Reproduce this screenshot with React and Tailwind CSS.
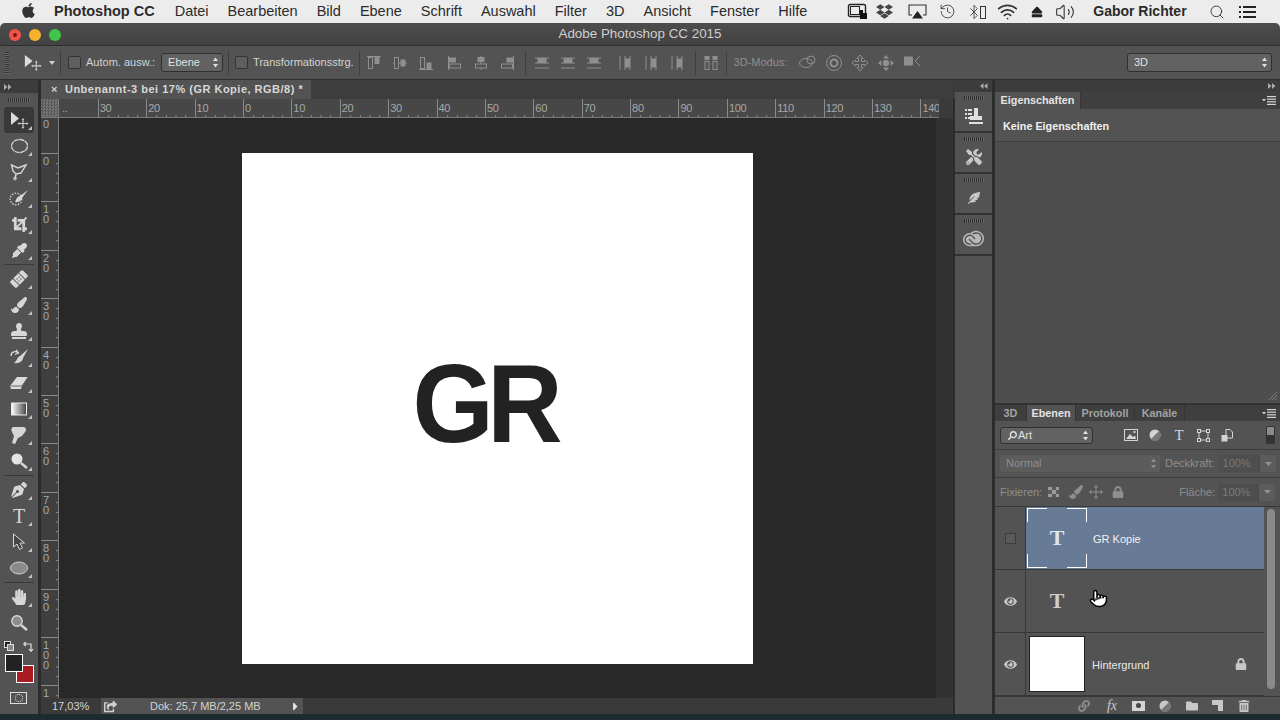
import React from 'react';
import { FaApple, FaDropbox, FaStamp, FaTools, FaFeatherAlt, FaEyeDropper, FaBandAid, FaPaintBrush, FaCrop, FaPenNib, FaHandPaper, FaSearch, FaEye, FaLock, FaLink, FaTrashAlt, FaFolder, FaShareSquare, FaCaretRight, FaEject } from 'react-icons/fa';
import { SiAdobecreativecloud } from 'react-icons/si';
import { Bluetooth, Wifi, Volume2, History, Search, Pointer } from 'lucide-react';

const Chevrons = () => (
  <svg width="7" height="11" viewBox="0 0 7 11" className="shrink-0">
    <path d="M3.5 0.5 L6 4 H1Z M3.5 10.5 L6 7 H1Z" fill="currentColor" />
  </svg>
);

const MoveIcon = ({ size = 20 }) => (
  <svg width={size} height={size} viewBox="0 0 20 20">
    <path d="M2 2 V15 L10 8.5Z" fill="#dcdcdc" />
    <path d="M14 9 V18 M9.5 13.5 H18.5" stroke="#c8c8c8" strokeWidth="1.2" />
    <path d="M14 8 L12.5 10 H15.5Z M14 19 L12.5 17 H15.5Z M8.5 13.5 L10.5 12 V15Z M19.5 13.5 L17.5 12 V15Z" fill="#c8c8c8" />
  </svg>
);

const Grip = ({ w = 'w-[22px]' }) => (
  <div className={`h-[4px] ${w} bg-[repeating-linear-gradient(90deg,#2c2c2c_0,#2c2c2c_1px,#6a6a6a_1px,#6a6a6a_2px)]`} />
);

const AlignIcon = ({ v = 0 }) => (
  <svg width="16" height="16" viewBox="0 0 16 16" fill="none" stroke="#8f8f8f">
    {v === 0 && <><path d="M1 1.5 H15" /><rect x="2.5" y="2.5" width="4" height="11" /><rect x="9" y="2.5" width="4" height="6" fill="#8f8f8f" /></>}
    {v === 1 && <><path d="M1 8 H15" /><rect x="2.5" y="2.5" width="4" height="11" fill="#535353" /><rect x="9" y="5" width="4" height="6" fill="#8f8f8f" /></>}
    {v === 2 && <><path d="M1 14.5 H15" /><rect x="2.5" y="2.5" width="4" height="11" /><rect x="9" y="8" width="4" height="6" fill="#8f8f8f" /></>}
    {v === 3 && <><path d="M1.5 1 V15" /><rect x="2.5" y="3" width="6" height="4" fill="#8f8f8f" /><rect x="2.5" y="9" width="11" height="4" /></>}
    {v === 4 && <><path d="M8 1 V15" /><rect x="5" y="2.5" width="6" height="4" fill="#8f8f8f" /><rect x="2.5" y="9" width="11" height="4" fill="#535353" /></>}
    {v === 5 && <><path d="M14.5 1 V15" /><rect x="8" y="3" width="6" height="4" fill="#8f8f8f" /><rect x="2.5" y="9" width="11" height="4" /></>}
    {v === 6 && <><path d="M1 3 H15 M1 8 H15 M1 13 H15" /><rect x="4" y="3.5" width="8" height="4" fill="#8f8f8f" /></>}
    {v === 7 && <><path d="M3 1 V15 M8 1 V15 M13 1 V15" /><rect x="8.5" y="4" width="4" height="8" fill="#8f8f8f" /></>}
    {v === 8 && <><rect x="2" y="1.5" width="4" height="3" fill="#8f8f8f" /><rect x="2" y="6.5" width="4" height="8" /><rect x="10" y="1.5" width="4" height="3" fill="#8f8f8f" /><rect x="10" y="6.5" width="4" height="8" /></>}
  </svg>
);

const Sep = () => <div className="mx-[5px] h-[24px] w-px bg-[#3f3f3f]" />;

const Check = ({ cls = 'bg-[#5f5f5f]' }) => (
  <div className={`h-[13px] w-[13px] rounded-[2px] border border-[#333] ${cls}`} />
);

const menus = ['Datei', 'Bearbeiten', 'Bild', 'Ebene', 'Schrift', 'Auswahl', 'Filter', '3D', 'Ansicht', 'Fenster', 'Hilfe'];

const MenuBar = () => (
  <div className="flex h-[23px] shrink-0 items-center whitespace-nowrap bg-[#ececec] pl-[20px] text-[14.5px] text-[#2b2b2b]">
    <FaApple size={17} className="mb-[2px] text-[#333]" />
    <span className="ml-[17px] font-bold">Photoshop CC</span>
    <div className="ml-[20px] flex gap-[19px]">
      {menus.map((m) => <span key={m}>{m}</span>)}
    </div>
    <div className="ml-[40px] flex items-center text-[#2a2a2a]">
      <svg width="24" height="18" viewBox="0 0 24 18" className="mr-[5px]">
        <rect x="1.5" y="1.5" width="17" height="12" rx="1.5" fill="none" stroke="#222" strokeWidth="1.4" />
        <rect x="3.5" y="3.5" width="9" height="8" fill="none" stroke="#222" />
        <path d="M13 7 h3 v3 h4 v6 h-7z" fill="#111" />
      </svg>
      <FaDropbox size={17} className="mr-[15px] text-[#444]" />
      <svg width="19" height="16" viewBox="0 0 19 16" className="mr-[12px]" fill="none">
        <path d="M4 11 H1 V1 H18 V11 H15" stroke="#333" strokeWidth="1.1" />
        <path d="M9.5 7 L15 14.5 H4Z" fill="#222" />
      </svg>
      <History size={17} strokeWidth={1.2} className="mr-[10px] text-[#333]" />
      <Bluetooth size={16} strokeWidth={1.2} className="mr-[-2px] text-[#333]" />
      <div className="mr-[11px] mt-[1px] h-[13px] w-[6px] border border-[#333]" />
      <Wifi size={21} strokeWidth={2} className="mr-[13px] text-[#333]" />
      <FaEject size={12} className="mr-[12px] text-[#222]" />
      <Volume2 size={20} strokeWidth={1.3} className="mr-[18px] text-[#333]" />
      <span className="text-[14px] font-bold">Gabor Richter</span>
      <Search size={16} strokeWidth={1.4} className="ml-[22px] text-[#333]" />
      <svg width="18" height="12" viewBox="0 0 18 12" className="ml-[14px]" fill="#222">
        <rect x="0" y="0" width="2" height="2" /><rect x="0" y="5" width="2" height="2" /><rect x="0" y="10" width="2" height="2" />
        <rect x="4" y="0" width="13" height="2" /><rect x="4" y="5" width="13" height="2" /><rect x="4" y="10" width="13" height="2" />
      </svg>
    </div>
  </div>
);

const TitleBar = () => (
  <div className="flex h-[23px] shrink-0 items-center justify-center bg-[#ececec]">
    <div className="relative flex h-full w-full items-center justify-center rounded-t-[5px] border-b border-[#2f2f2f] bg-[linear-gradient(#4d4d4d,#424242)] text-[13.4px] text-[#cfcfcf]">
      <div className="absolute left-[9px] top-[6px] flex gap-[8px]">
        <div className="flex h-[12px] w-[12px] items-center justify-center rounded-full bg-[#f2524a]"><div className="h-[4px] w-[4px] rounded-full bg-[#7a1712]" /></div>
        <div className="h-[12px] w-[12px] rounded-full bg-[#f6b22f]" />
        <div className="h-[12px] w-[12px] rounded-full bg-[#3fc64a]" />
      </div>
      Adobe Photoshop CC 2015
    </div>
  </div>
);

const OptionsBar = () => (
  <div className="flex h-[34px] shrink-0 items-center border-b border-[#2f2f2f] bg-[#535353] pl-[5px] text-[11px] text-[#d4d4d4]">
    <div className="h-[22px] w-[4px] bg-[repeating-linear-gradient(#2f2f2f_0,#2f2f2f_1px,#6b6b6b_1px,#6b6b6b_2px)]" />
    <div className="ml-[14px]"><MoveIcon size={19} /></div>
    <svg width="6" height="4" className="ml-[7px]"><path d="M0 0 H6 L3 4Z" fill="#cfcfcf" /></svg>
    <Sep />
    <div className="ml-[2px]"><Check /></div>
    <span className="ml-[5px] whitespace-nowrap">Autom. ausw.:</span>
    <div className="ml-[6px] flex h-[19px] w-[62px] items-center justify-between rounded-[3px] border border-[#303030] bg-[#626262] pl-[6px] pr-[3px] font-medium text-[#e0e0e0]">
      Ebene <Chevrons />
    </div>
    <Sep />
    <div className="ml-[1px]"><Check /></div>
    <span className="ml-[5px] whitespace-nowrap">Transformationsstrg.</span>
    <Sep />
    <div className="ml-[-4px] flex">
      {[0, 1, 2].map((v) => <div key={v} className="flex w-[26px] justify-center"><AlignIcon v={v} /></div>)}
    </div>
    <div className="ml-[3px] flex">
      {[3, 4, 5].map((v) => <div key={v} className="flex w-[26px] justify-center"><AlignIcon v={v} /></div>)}
    </div>
    <Sep />
    <div className="ml-[-2px] flex">
      {[6, 6, 6].map((v, i) => <div key={i} className="flex w-[26px] justify-center"><AlignIcon v={v} /></div>)}
    </div>
    <div className="ml-[5px] flex">
      {[7, 7, 7].map((v, i) => <div key={i} className="flex w-[26px] justify-center"><AlignIcon v={v} /></div>)}
    </div>
    <Sep />
    <div className="flex w-[20px] justify-center"><AlignIcon v={8} /></div>
    <Sep />
    <span className="ml-[2px] whitespace-nowrap text-[#8f8f8f]">3D-Modus:</span>
    <div className="ml-[8px] flex text-[#8f8f8f]">
      <div className="flex w-[26px] justify-center">
        <svg width="20" height="16" viewBox="0 0 20 16" fill="none" stroke="currentColor"><ellipse cx="8" cy="9" rx="6.5" ry="4.5" /><circle cx="13" cy="6" r="4" /></svg>
      </div>
      <div className="flex w-[26px] justify-center">
        <svg width="18" height="18" viewBox="0 0 18 18" fill="none" stroke="currentColor"><circle cx="9" cy="9" r="7.5" /><circle cx="9" cy="9" r="3.5" strokeWidth="2" /></svg>
      </div>
      <div className="flex w-[26px] justify-center">
        <svg width="18" height="18" viewBox="0 0 18 18" fill="none" stroke="currentColor"><path d="M9 1 L12 4.5 H10.5 V7.5 H13.5 V6 L17 9 L13.5 12 V10.5 H10.5 V13.5 H12 L9 17 L6 13.5 H7.5 V10.5 H4.5 V12 L1 9 L4.5 6 V7.5 H7.5 V4.5 H6Z" /></svg>
      </div>
      <div className="flex w-[26px] justify-center">
        <svg width="18" height="18" viewBox="0 0 18 18" fill="currentColor"><path d="M9 1 L12 4.5 H6Z M9 17 L6 13.5 H12Z M1 9 L4.5 6 V12Z M17 9 L13.5 6 V12Z" /><circle cx="9" cy="9" r="3.2" /></svg>
      </div>
      <div className="flex w-[26px] justify-center">
        <svg width="18" height="14" viewBox="0 0 18 14" fill="currentColor"><rect x="1" y="2.5" width="9" height="9" rx="1" /><path d="M17 2 L12 7 L17 12" fill="none" stroke="currentColor" /></svg>
      </div>
    </div>
    <div className="ml-auto mr-[8px] flex h-[19px] w-[145px] items-center justify-between rounded-[3px] border border-[#303030] bg-[#626262] pl-[6px] pr-[3px] font-medium text-[#e0e0e0]">
      3D <Chevrons />
    </div>
  </div>
);

const Arrows = ({ dir = 'right' }) => (
  <svg width="8" height="6" viewBox="0 0 8 6" fill="#aaa">
    {dir === 'right' ? <path d="M0 0 L3.5 3 L0 6Z M4 0 L7.5 3 L4 6Z" /> : <path d="M3.5 0 L0 3 L3.5 6Z M7.5 0 L4 3 L7.5 6Z" />}
  </svg>
);

const ic = 'text-[#d6d6d6]';
const tools = [
  { icon: <MoveIcon />, active: true },
  { icon: <svg width="19" height="16" viewBox="0 0 19 16"><ellipse cx="9.5" cy="8" rx="8" ry="6.5" fill="none" stroke="#d6d6d6" strokeWidth="1.3" strokeDasharray="5 0.6" /></svg> },
  { icon: <svg width="19" height="18" viewBox="0 0 19 18"><path d="M1.5 2 L8 5 L16 2 L11 10 L6 11 L3 8Z M6 11 L5 16" fill="none" stroke="#d6d6d6" strokeWidth="1.4" /><circle cx="5" cy="15.5" r="1.4" fill="none" stroke="#d6d6d6" /></svg> },
  { icon: <svg width="20" height="18" viewBox="0 0 20 18"><circle cx="7" cy="10" r="5.8" fill="none" stroke="#d6d6d6" strokeDasharray="1.4 1.4" strokeWidth="1.3" /><path d="M19 1 L11 7 C7 8 7 12 6 13 C10 14 13 11 13 9Z" fill="#d6d6d6" /></svg> },
  { icon: <FaCrop size={15} className={ic} /> },
  { icon: <FaEyeDropper size={15} className={ic} />, sep: true },
  { icon: <FaBandAid size={18} className={`${ic} -rotate-45`} /> },
  { icon: <FaPaintBrush size={16} className={ic} /> },
  { icon: <FaStamp size={16} className={ic} /> },
  { icon: <svg width="20" height="18" viewBox="0 0 20 18"><path d="M19 1 L11 8 C8 9 8 13 5 15 C10 16 14 13 14 10Z" fill="#d6d6d6" /><path d="M2 8 C2 3 7 3 9 5 M7 2 L9.5 5 L6 6.5" fill="none" stroke="#d6d6d6" strokeWidth="1.3" /></svg> },
  { icon: <svg width="20" height="14" viewBox="0 0 20 14"><path d="M8 1 H19 L13 10 L12 13 H2 L1 10Z" fill="#dcdcdc" /><path d="M1.5 10 H13 L19 1" fill="none" stroke="#666" /></svg> },
  { icon: <svg width="16" height="16" viewBox="0 0 16 16"><defs><linearGradient id="gr" x1="0" x2="1"><stop offset="0" stopColor="#fff" /><stop offset="1" stopColor="#444" /></linearGradient></defs><rect x="0.5" y="2" width="15" height="12" fill="url(#gr)" stroke="#eee" /></svg> },
  { icon: <svg width="18" height="19" viewBox="0 0 18 19"><path d="M3 1 H13 C16 1 17 4 15 6 L12 10 L8 12 L5 18 L2 17 L4 10 L2 6 C1 4 1 2 3 1Z" fill="#d6d6d6" /></svg> },
  { icon: <svg width="18" height="18" viewBox="0 0 18 18"><circle cx="7" cy="7" r="5.5" fill="#e4e4e4" /><path d="M11 11 L17 16" stroke="#d6d6d6" strokeWidth="2.4" /></svg>, sep: true },
  { icon: <FaPenNib size={16} className={ic} /> },
  { icon: <span className="font-['Liberation_Serif',serif] text-[20px] leading-none text-[#d6d6d6]">T</span> },
  { icon: <svg width="14" height="18" viewBox="0 0 14 18"><path d="M1.5 1 V14 L5 11 L7.5 16.5 L10.5 15 L8 10 L12.5 10Z" fill="#444" stroke="#d6d6d6" /></svg> },
  { icon: <svg width="20" height="14" viewBox="0 0 20 14"><ellipse cx="10" cy="7" rx="8.5" ry="6" fill="#8a8a8a" stroke="#cfcfcf" /></svg>, sep: true },
  { icon: <FaHandPaper size={16} className={ic} /> },
  { icon: <svg width="18" height="18" viewBox="0 0 18 18"><circle cx="7" cy="7" r="5.2" fill="#8d8d8d" stroke="#d6d6d6" strokeWidth="1.4" /><path d="M11 11 L17 16" stroke="#d6d6d6" strokeWidth="2.4" /></svg>, bare: true },
];

const ToolBox = () => (
  <div className="flex w-[38px] shrink-0 flex-col bg-[#535353]">
    <div className="flex h-[13px] items-center bg-[#3c3c3c] pl-[4px]"><Arrows /></div>
    <div className="flex h-[14px] items-center justify-center"><Grip /></div>
    <div className="flex flex-col items-center">
      {tools.map((t, i) => (
        <React.Fragment key={i}>
          <div className={`relative flex h-[26px] w-[30px] items-center justify-center rounded-[3px] ${t.active ? 'bg-[#383838]' : ''}`}>
            {t.icon}
            {!t.bare && <div className="absolute bottom-[3px] right-[2px] h-0 w-0 border-b-[4px] border-l-[4px] border-b-[#c4c4c4] border-l-transparent" />}
          </div>
          {t.sep && <div className="my-[1px] h-px w-[30px] bg-[#3a3a3a]" />}
        </React.Fragment>
      ))}
    </div>
    <div className="mt-[4px] flex h-[12px] items-center justify-between px-[4px]">
      <svg width="10" height="10" viewBox="0 0 10 10"><rect x="0.5" y="0.5" width="6" height="6" fill="#222" stroke="#ddd" /><rect x="3.5" y="3.5" width="6" height="6" fill="#888" stroke="#ddd" /></svg>
      <svg width="11" height="11" viewBox="0 0 11 11" fill="none" stroke="#ddd" strokeWidth="1.2"><path d="M1 3 H8 V10 M0.5 3 L3 1 M0.5 3 L3 5 M8 10.5 L6 8 M8 10.5 L10 8" /></svg>
    </div>
    <div className="relative ml-[5px] mt-[2px] h-[29px] w-[29px]">
      <div className="absolute bottom-0 right-0 h-[18px] w-[18px] border border-white bg-[#a81c22]" />
      <div className="absolute left-0 top-0 h-[18px] w-[18px] border border-white bg-[#222]" />
    </div>
    <div className="ml-[10px] mt-[9px] flex h-[12px] w-[17px] items-center justify-center border border-[#ddd]">
      <div className="h-[8px] w-[8px] rounded-full border border-dotted border-[#eee]" />
    </div>
  </div>
);

const topLabels = ['30', '20', '10', '0', '10', '20', '30', '40', '50', '60', '70', '80', '90', '100', '110', '120', '130', '140'];
const leftLabels = ['0', '10', '20', '30', '40', '50', '60', '70', '80', '90', '100', '1'];

const HTicks = () => (
  <svg className="absolute bottom-0 left-0" width="49" height="5">
    <path d="M9.7 5 V3 M19.4 5 V3 M29 5 V3 M38.7 5 V3" stroke="#8a8a8a" />
  </svg>
);
const VTicks = () => (
  <svg className="absolute right-0 top-0" width="5" height="49">
    <path d="M5 9.7 H3 M5 19.4 H3 M5 29 H3 M5 38.7 H3" stroke="#8a8a8a" />
  </svg>
);

const TopRuler = () => (
  <div className="flex h-[19px] flex-1 overflow-hidden border-b border-[#7b7b7b] bg-[#474747] text-[11px] leading-[18px] tracking-[-0.3px] text-[#a8a8a8]">
    <div className="relative w-[38.8px] shrink-0 pl-[3px]">..</div>
    {topLabels.map((l, i) => (
      <div key={i} className="relative w-[48.4px] shrink-0 overflow-hidden border-l border-[#8a8a8a] pl-[1px] last:w-[19.4px]">
        {l}
        <HTicks />
      </div>
    ))}
  </div>
);

const LeftRuler = () => (
  <div className="flex w-[18px] shrink-0 flex-col overflow-hidden border-r border-[#7b7b7b] bg-[#3f3f3f] text-[11px] leading-[10px] text-[#a8a8a8]">
    <div className="h-[35px] shrink-0 pl-[2px] pt-[1px]">0</div>
    {leftLabels.map((l, i) => (
      <div key={i} className="relative h-[48.4px] shrink-0 border-t border-[#8a8a8a] pl-[2px] pt-[2px]">
        {l.split('').map((d, j) => <div key={j}>{d}</div>)}
        <VTicks />
      </div>
    ))}
  </div>
);

const DocArea = () => (
  <div className="flex min-w-0 flex-1 flex-col">
    <div className="flex h-[19px] shrink-0 bg-[#3d3d3d]">
      <div className="flex w-[270px] items-center gap-[7px] bg-[#535353] pl-[10px] text-[11px] font-bold tracking-[0.5px] text-[#d8d8d8]">
        <span className="text-[#cfcfcf]">×</span>
        <span className="whitespace-nowrap">Unbenannt-3 bei 17% (GR Kopie, RGB/8) *</span>
      </div>
    </div>
    <div className="flex h-[19px] shrink-0">
      <div className="w-[18px] border-b border-r border-[#7b7b7b] bg-[repeating-conic-gradient(#5a5a5a_0_25%,#777_0_50%)] bg-[length:3px_3px]" />
      <div className="flex min-w-0 w-[880px] shrink-0"><TopRuler /></div>
      <div className="flex-1 border-r-2 border-[#2c2c2c] bg-[#3a3a3a]" />
    </div>
    <div className="flex min-h-0 flex-1">
      <LeftRuler />
      <div className="w-[877px] shrink-0 bg-[#282828] pl-[183px] pt-[35px]">
        <div className="flex h-[511px] w-[511px] items-center justify-center bg-white pb-[8px] pr-[26px]">
          <span className="scale-x-[0.94] text-[111px] font-bold leading-none tracking-[-7px] text-[#222]">GR</span>
        </div>
      </div>
      <div className="flex-1 border-r-2 border-[#2c2c2c] bg-[#323232]" />
    </div>
    <div className="flex h-[16px] shrink-0 items-center border-r-2 border-[#2c2c2c] bg-[#3a3a3a] text-[11px] text-[#d2d2d2]">
      <div className="w-[60px] pl-[11px]">17,03%</div>
      <div className="flex h-full w-[202px] items-center bg-[#535353]">
        <FaShareSquare size={13} className="ml-[3px] text-[#d0d0d0]" />
        <span className="ml-[33px]">Dok: 25,7 MB/2,25 MB</span>
        <FaCaretRight size={13} className="ml-auto mr-[1px] text-[#e4e4e4]" />
      </div>
    </div>
  </div>
);

const DockCell = ({ children }) => (
  <div className="flex h-[41px] flex-col items-center border-b-2 border-[#323232] bg-[#535353] pt-[4px]">
    <Grip w="w-[20px]" />
    <div className="flex flex-1 items-center justify-center text-[#c8c8c8]">{children}</div>
  </div>
);

const Dock = () => (
  <div className="flex w-[40px] shrink-0 flex-col border-r-3 border-[#2c2c2c]">
    <div className="flex h-[12px] items-center justify-end bg-[#3c3c3c] pr-[4px]"><Arrows dir="left" /></div>
    <DockCell>
      <svg width="20" height="20" viewBox="0 0 20 20" fill="#e0e0e0">
        <rect x="1" y="3" width="2" height="2" /><rect x="4" y="3" width="4" height="2" />
        <rect x="1" y="7" width="2" height="2" /><rect x="4" y="7" width="4" height="2" />
        <rect x="1" y="11" width="2" height="2" /><rect x="4" y="11" width="4" height="2" />
        <path d="M10 2 h4 v8 h4 v4 H6 v-4 h4z M5 16 H19 V18 H5z" />
      </svg>
    </DockCell>
    <DockCell><FaTools size={16} /></DockCell>
    <DockCell><FaFeatherAlt size={12} /></DockCell>
    <DockCell><SiAdobecreativecloud size={21} className="text-[#b8b8b8]" /></DockCell>
    <div className="flex-1 bg-[#535353]" />
  </div>
);

const Tab = ({ label, active, w }) => (
  <div className={`flex h-full items-center justify-center border-r border-[#353535] text-[10.8px] font-bold ${w} ${active ? 'bg-[#535353] text-[#e4e4e4]' : 'text-[#a4a4a4]'}`}>
    {label}
  </div>
);

const PanelMenu = () => (
  <svg width="14" height="9" viewBox="0 0 14 9" fill="#d4d4d4" className="ml-auto mr-[4px]">
    <path d="M0 3 H4 L2 5.5Z" /><rect x="5" y="0" width="9" height="1.2" /><rect x="5" y="2.6" width="9" height="1.2" /><rect x="5" y="5.2" width="9" height="1.2" /><rect x="5" y="7.8" width="9" height="1.2" />
  </svg>
);

const LayerRow = ({ eye, children }) => (
  <div className="flex h-[63px] shrink-0 border-b border-[#383838]">
    <div className="flex w-[31px] shrink-0 items-center justify-center border-r border-[#383838]">
      {eye ? <FaEye size={13} className="text-[#c8c8c8]" /> : <div className="h-[11px] w-[11px] border border-[#3d3d3d] bg-[#5a5a5a]" />}
    </div>
    {children}
  </div>
);

const Panels = () => (
  <div className="flex min-w-0 flex-1 flex-col bg-[#535353]">
    <div className="flex h-[12px] shrink-0 items-center justify-end bg-[#3c3c3c] pr-[4px]"><Arrows /></div>
    {/* Eigenschaften */}
    <div className="flex h-[17px] shrink-0 items-center bg-[#3f3f3f]">
      <Tab label="Eigenschaften" active w="w-[86px]" />
      <PanelMenu />
    </div>
    <div className="flex h-[33px] shrink-0 items-center border-b border-[#3f3f3f] pl-[8px] pt-[2px] text-[10.8px] font-bold text-[#f0f0f0]">Keine Eigenschaften</div>
    <div className="flex h-[261px] shrink-0 items-end justify-end bg-[#4e4e4e] p-[2px]">
      <svg width="10" height="10" viewBox="0 0 10 10" stroke="#7a7a7a"><path d="M9 1 L1 9 M9 4 L4 9 M9 7 L7 9" /></svg>
    </div>
    {/* Ebenen */}
    <div className="flex h-[18px] shrink-0 items-center border-t-2 border-[#323232] bg-[#3f3f3f]">
      <Tab label="3D" w="w-[32px]" />
      <Tab label="Ebenen" active w="w-[49px]" />
      <Tab label="Protokoll" w="w-[59px]" />
      <Tab label="Kanäle" w="w-[50px]" />
      <PanelMenu />
    </div>
    <div className="flex h-[29px] shrink-0 items-center border-b border-[#3d3d3d] pl-[5px]">
      <div className="flex h-[17px] w-[93px] items-center justify-between rounded-[3px] border border-[#303030] bg-[#626262] pl-[7px] pr-[3px] text-[11px] font-medium text-[#e0e0e0]">
        <span className="flex items-center gap-[1px]"><FaSearch size={9} className="-scale-x-100" />Art</span><Chevrons />
      </div>
      <div className="ml-[26px] flex items-center text-[#d4d4d4]">
        <div className="flex w-[24px] justify-center">
          <svg width="14" height="12" viewBox="0 0 14 12"><rect x="0.5" y="0.5" width="13" height="11" fill="none" stroke="currentColor" /><path d="M2 10 L6 5 L9 8 L11 6.5 L12 10Z" fill="currentColor" /><rect x="9.5" y="2" width="2" height="2" fill="currentColor" /></svg>
        </div>
        <div className="flex w-[24px] justify-center">
          <svg width="12" height="12" viewBox="0 0 12 12"><circle cx="6" cy="6" r="5.5" fill="currentColor" /><path d="M10 2 A5.5 5.5 0 0 1 2 10Z" fill="#777" /></svg>
        </div>
        <div className="flex w-[24px] justify-center font-['Liberation_Serif',serif] text-[15px] leading-none">T</div>
        <div className="flex w-[24px] justify-center">
          <svg width="13" height="13" viewBox="0 0 13 13" fill="none" stroke="currentColor"><rect x="2" y="2" width="9" height="9" /><rect x="0.5" y="0.5" width="3" height="3" fill="#535353" /><rect x="9.5" y="0.5" width="3" height="3" fill="#535353" /><rect x="0.5" y="9.5" width="3" height="3" fill="#535353" /><rect x="9.5" y="9.5" width="3" height="3" fill="#535353" /></svg>
        </div>
        <div className="flex w-[24px] justify-center">
          <svg width="12" height="13" viewBox="0 0 12 13"><path d="M5 0.5 H9 L11.5 3 V9 H5Z" fill="none" stroke="currentColor" /><rect x="0.5" y="6" width="6" height="6.5" fill="currentColor" /></svg>
        </div>
      </div>
      <div className="ml-auto mr-[5px] flex h-[18px] w-[9px] flex-col rounded-[1px] border border-[#333]">
        <div className="h-1/2 bg-[#8a8a8a]" /><div className="h-1/2 bg-[#333]" />
      </div>
    </div>
    <div className="flex h-[28px] shrink-0 items-center border-b border-[#3d3d3d] pl-[5px] text-[11px] text-[#8e8e8e]">
      <div className="flex h-[17px] w-[160px] items-center justify-between rounded-[2px] bg-[#5c5c5c] pl-[6px] pr-[3px]">
        Normal <Chevrons />
      </div>
      <span className="ml-[5px] font-medium">Deckkraft:</span>
      <div className="ml-[4px] flex h-[17px] w-[57px] items-center rounded-[2px] bg-[#5c5c5c] text-[#7a7a7a]">
        <span className="w-[41px] border-r border-[#4a4a4a] bg-[#4e4e4e] pl-[4px] leading-[17px]">100%</span>
        <svg width="7" height="4" className="ml-[5px]"><path d="M0 0 H7 L3.5 4Z" fill="#8e8e8e" /></svg>
      </div>
    </div>
    <div className="flex h-[29px] shrink-0 items-center border-b border-[#383838] pl-[5px] text-[11px] font-medium text-[#8e8e8e]">
      <span>Fixieren:</span>
      <div className="ml-[6px] grid h-[10px] w-[11px] grid-cols-3 bg-[#8a8a8a]">
        {[0, 1, 2, 3, 4, 5, 6, 7, 8].map((i) => <div key={i} className={i % 2 ? 'bg-[#5a5a5a]' : 'bg-[#9a9a9a]'} />)}
      </div>
      <FaPaintBrush size={14} className="ml-[10px]" />
      <svg width="14" height="14" viewBox="0 0 18 18" className="ml-[6px]" fill="none" stroke="currentColor" strokeWidth="1.3"><path d="M9 1 V17 M1 9 H17 M7 3 L9 1 L11 3 M7 15 L9 17 L11 15 M3 7 L1 9 L3 11 M15 7 L17 9 L15 11" /></svg>
      <FaLock size={12} className="ml-[9px]" />
      <span className="ml-[55px]">Fläche:</span>
      <div className="ml-[3px] flex h-[17px] w-[57px] items-center rounded-[2px] bg-[#5c5c5c] text-[#7a7a7a]">
        <span className="w-[41px] border-r border-[#4a4a4a] bg-[#4e4e4e] pl-[4px] font-normal leading-[17px]">100%</span>
        <svg width="7" height="4" className="ml-[5px]"><path d="M0 0 H7 L3.5 4Z" fill="#8e8e8e" /></svg>
      </div>
    </div>
    <div className="flex flex-1">
      <div className="flex w-[269px] shrink-0 flex-col">
        <LayerRow>
          <div className="flex flex-1 items-center bg-[#677a96] pl-[1px]">
            <div className="relative flex h-[60px] w-[60px] items-center justify-center">
              <div className="absolute left-0 top-0 h-[14px] w-[20px] border-l border-t border-white" />
              <div className="absolute right-0 top-0 h-[14px] w-[20px] border-r border-t border-white" />
              <div className="absolute bottom-0 left-0 h-[14px] w-[20px] border-b border-l border-white" />
              <div className="absolute bottom-0 right-0 h-[14px] w-[20px] border-b border-r border-white" />
              <span className="font-['Liberation_Serif',serif] text-[22px] font-bold leading-none text-[#dfe6ee]">T</span>
            </div>
            <span className="ml-[6px] mt-[3px] text-[11px] text-[#f2f2f2]">GR Kopie</span>
          </div>
        </LayerRow>
        <LayerRow eye>
          <div className="relative flex flex-1 items-center pl-[1px]">
            <div className="flex h-[60px] w-[60px] items-center justify-center font-['Liberation_Serif',serif] text-[22px] font-bold leading-none text-[#cfcfcf]">T</div>
            <div className="absolute left-[63px] top-[19px]">
              <Pointer size={19} fill="#fff" stroke="#000" strokeWidth={1.8} />
            </div>
          </div>
        </LayerRow>
        <LayerRow eye>
          <div className="flex flex-1 items-center pl-[3px]">
            <div className="h-[56px] w-[56px] border border-[#222] bg-white" />
            <span className="ml-[7px] mt-[3px] text-[11px] text-[#eaeaea]">Hintergrund</span>
            <FaLock size={12} className="ml-auto mr-[17px] text-[#c8c8c8]" />
          </div>
        </LayerRow>
      </div>
      <div className="ml-[3px] mt-[2px] h-[180px] w-[8px] rounded-full bg-[#8a8a8a]" />
    </div>
    <div className="flex h-[18px] shrink-0 items-center justify-end border-t border-[#383838] pr-[30px] text-[#c8c8c8]">
      <FaLink size={12} className="mr-[17px] text-[#8c8c8c]" />
      <span className="mr-[15px] font-['Liberation_Serif',serif] text-[14px] italic leading-none">fx</span>
      <div className="mr-[14px] flex h-[10px] w-[13px] items-center justify-center bg-[#d4d4d4]"><div className="h-[5px] w-[5px] rounded-full bg-[#444]" /></div>
      <svg width="12" height="12" viewBox="0 0 12 12" className="mr-[15px]"><circle cx="6" cy="6" r="5.5" fill="currentColor" /><path d="M10 2 A5.5 5.5 0 0 1 2 10Z" fill="#777" /></svg>
      <FaFolder size={12} className="mr-[14px]" />
      <svg width="11" height="11" viewBox="0 0 11 11" className="mr-[15px]"><rect width="11" height="11" fill="currentColor" /><path d="M0 5 H6 V11 H0Z" fill="#535353" /></svg>
      <FaTrashAlt size={12} />
    </div>
  </div>
);

const App = () => (
  <div className="flex h-[720px] w-[1280px] flex-col overflow-hidden bg-[#1c2b30] font-['Liberation_Sans',sans-serif]">
    <MenuBar />
    <TitleBar />
    <OptionsBar />
    <div className="flex h-[634px] shrink-0">
      <ToolBox />
      <div className="w-[3px] shrink-0 bg-[#2c2c2c]" />
      <DocArea />
      <Dock />
      <div className="flex w-[285px] shrink-0"><Panels /></div>
    </div>
  </div>
);

export default App;
